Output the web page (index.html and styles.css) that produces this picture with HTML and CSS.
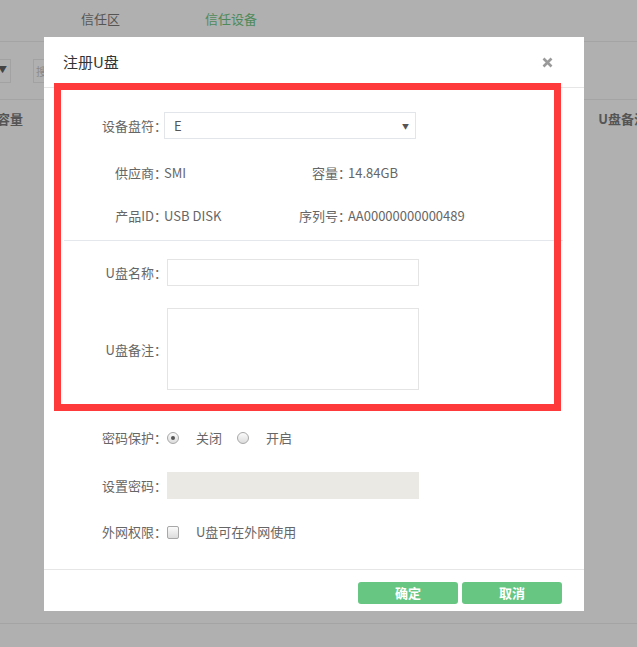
FILE: index.html
```html
<!DOCTYPE html>
<html lang="zh-CN">
<head>
<meta charset="utf-8">
<title>注册U盘</title>
<link rel="stylesheet" href="styles.css">
</head>
<body>
<div class="page">
  <div class="tabs">
    <span class="tab tab-a">信任区</span>
    <span class="tab tab-b">信任设备</span>
  </div>
  <div class="toolbar">
    <div class="tb-select"><span class="tb-arrow">▼</span></div>
    <div class="tb-box">搜</div>
  </div>
  <div class="thead">
    <span class="th th-cap">容量</span>
    <span class="th th-note">U盘备注</span>
  </div>
  <div class="tbody"></div>
  <div class="pagebottom"></div>
</div>

<div class="modal">
  <div class="modal-header">
    <span class="modal-title">注册U盘</span>
    <svg class="close" width="11" height="11" viewBox="0 0 11 11"><path d="M1.5 1.5 L9.5 9.5 M9.5 1.5 L1.5 9.5" stroke="#9a9a9a" stroke-width="2.6" stroke-linecap="butt"/></svg>
  </div>
  <div class="modal-body">
    <div class="row row-select">
      <label class="lbl">设备盘符<span class="c">：</span></label>
      <div class="select"><span class="sel-val">E</span><span class="sel-arrow">▼</span></div>
    </div>
    <div class="info info-1">
      <span class="lbl">供应商<span class="c">：</span></span><span class="val">SMI</span>
      <span class="lbl">容量<span class="c">：</span></span><span class="val">14.84GB</span>
    </div>
    <div class="info info-2">
      <span class="lbl">产品ID<span class="c">：</span></span><span class="val">USB DISK</span>
      <span class="lbl">序列号<span class="c">：</span></span><span class="val">AA00000000000489</span>
    </div>
    <div class="divider"></div>
    <div class="row row-name">
      <label class="lbl">U盘名称<span class="c">：</span></label>
      <div class="input"></div>
    </div>
    <div class="row row-note">
      <label class="lbl">U盘备注<span class="c">：</span></label>
      <div class="textarea"></div>
    </div>
    <div class="row row-radio">
      <label class="lbl">密码保护<span class="c">：</span></label>
      <span class="radio checked"></span><span class="opt">关闭</span>
      <span class="radio"></span><span class="opt">开启</span>
    </div>
    <div class="row row-pass">
      <label class="lbl">设置密码<span class="c">：</span></label>
      <div class="input disabled"></div>
    </div>
    <div class="row row-check">
      <label class="lbl">外网权限<span class="c">：</span></label>
      <span class="checkbox"></span><span class="opt">U盘可在外网使用</span>
    </div>
  </div>
  <div class="modal-footer">
    <button class="btn">确定</button>
    <button class="btn">取消</button>
  </div>
  <div class="annot"></div>
</div>
</body>
</html>
```

FILE: styles.css
```css
* { box-sizing: border-box; }
html, body { margin: 0; padding: 0; }
body {
  width: 637px;
  height: 647px;
  overflow: hidden;
  background: #b0b0b0;
  font-family: "Noto Sans CJK SC", "Microsoft YaHei", sans-serif;
  font-size: 13px;
  position: relative;
}

/* background page (under overlay) */
.page { width: 637px; }
.tabs {
  height: 42px;
  border-bottom: 1px solid #a4a4a4;
  display: flex;
  align-items: center;
  padding-left: 81px;
}
.tab { font-size: 13px; line-height: 18px; margin-top: -4px; }
.tab-a { color: #555; }
.tab-b { color: #4e8a59; margin-left: 85px; }

.toolbar {
  height: 58px;
  border-bottom: 1px solid #a4a4a4;
  display: flex;
  align-items: flex-start;
  padding-top: 17px;
}
.tb-select {
  width: 11px;
  height: 24px;
  border: 1px solid #a2a2a2;
  border-left: none;
  position: relative;
}
.tb-arrow {
  position: absolute;
  left: -2px;
  top: 3px;
  font-size: 9px;
  color: #444;
}
.tb-box {
  margin-left: 22px;
  width: 30px;
  height: 24px;
  border: 1px solid #a2a2a2;
  color: #888;
  font-size: 11px;
  padding-left: 2px;
  line-height: 22px;
}
.thead {
  height: 37px;
  display: flex;
  align-items: center;
}
.th { font-weight: bold; color: #555; font-size: 13px; }
.th-cap { margin-left: -3px; }
.th-note { margin-left: auto; margin-right: -10px; }
.tbody { height: 486px; }
.pagebottom { border-top: 1px solid #a4a4a4; }

/* modal */
.modal {
  position: absolute;
  left: 44px;
  top: 37px;
  width: 540px;
  height: 574px;
  background: #fff;
}
.modal-header {
  height: 51px;
  border-bottom: 1px solid #e6e6e6;
  display: flex;
  align-items: center;
  padding: 0 31px 0 19px;
}
.modal-title { font-size: 15px; color: #333; line-height: 20px; margin-top: -1px; }
.close { margin-left: auto; }

.modal-body { padding: 24px 0 26px; height: 481px; }
.lbl {
  color: #666;
  font-size: 13px;
  text-align: right;
  line-height: 20px;
  white-space: nowrap;
}
.c { letter-spacing: -3px; }
.row { display: flex; align-items: center; }
.row > .lbl { width: 120px; flex: none; }

.row-select { height: 27px; margin-bottom: 24px; }
.select {
  width: 252px;
  height: 27px;
  border: 1px solid #e2e5ea;
  display: flex;
  align-items: center;
  padding: 0 6px 0 9px;
  color: #555;
}
.sel-val { font-size: 13px; }
.sel-arrow { margin-left: auto; font-size: 7px; color: #555; }

.info {
  display: grid;
  grid-template-columns: 120px 100px 84px auto;
  height: 20px;
  color: #666;
  line-height: 20px;
}
.info .val { color: #666; }
.info-1 { margin-bottom: 23px; }
.info-2 { margin-bottom: 14px; }

.divider { height: 1px; background: #e4e7ec; margin: 0 21px 0 20px; }

.input {
  width: 252px;
  height: 27px;
  border: 1px solid #e4e4e4;
  margin-left: 3px;
}
.input.disabled { background: #eae9e4; border-color: #eae9e4; }
.row-name { margin-top: 18px; height: 27px; }
.row-note { margin-top: 22px; height: 82px; }
.textarea {
  width: 252px;
  height: 82px;
  border: 1px solid #e4e4e4;
  margin-left: 3px;
}
.row-note .lbl { margin-top: 1px; }

.row-radio { margin-top: 38px; height: 20px; }
.radio {
  width: 12px;
  height: 12px;
  border-radius: 50%;
  border: 1px solid #a8a8a8;
  background: linear-gradient(#fbfbfb, #dcdcdc);
  margin-left: 3px;
  position: relative;
  flex: none;
}
.radio.checked::after {
  content: "";
  position: absolute;
  left: 3px;
  top: 3px;
  width: 4px;
  height: 4px;
  border-radius: 50%;
  background: #555;
}
.opt { color: #666; line-height: 20px; margin-left: 17px; margin-right: 12px; }
.row-pass { margin-top: 24px; height: 27px; }
.row-check { margin-top: 23px; height: 20px; }
.checkbox {
  width: 12px;
  height: 13px;
  border-radius: 2px;
  border: 1px solid #a8a8a8;
  background: linear-gradient(#fbfbfb, #dcdcdc);
  margin-left: 3px;
  flex: none;
}

.modal-footer {
  border-top: 1px solid #e6e6e6;
  height: 42px;
  display: flex;
  justify-content: flex-end;
  align-items: flex-start;
  padding: 12px 22px 0 0;
  gap: 4px;
}
.btn {
  width: 100px;
  height: 22px;
  border: none;
  border-radius: 3px;
  background: #66c682;
  color: #fff;
  font-family: "Noto Sans CJK SC", sans-serif;
  font-size: 13px;
  font-weight: bold;
  padding: 0;
  line-height: 22px;
}

/* red annotation frame drawn over the screenshot */
.annot {
  position: absolute;
  left: 10px;
  top: 46px;
  width: 507px;
  height: 328px;
  border: 7px solid #ff3a3a;
  pointer-events: none;
}
```
